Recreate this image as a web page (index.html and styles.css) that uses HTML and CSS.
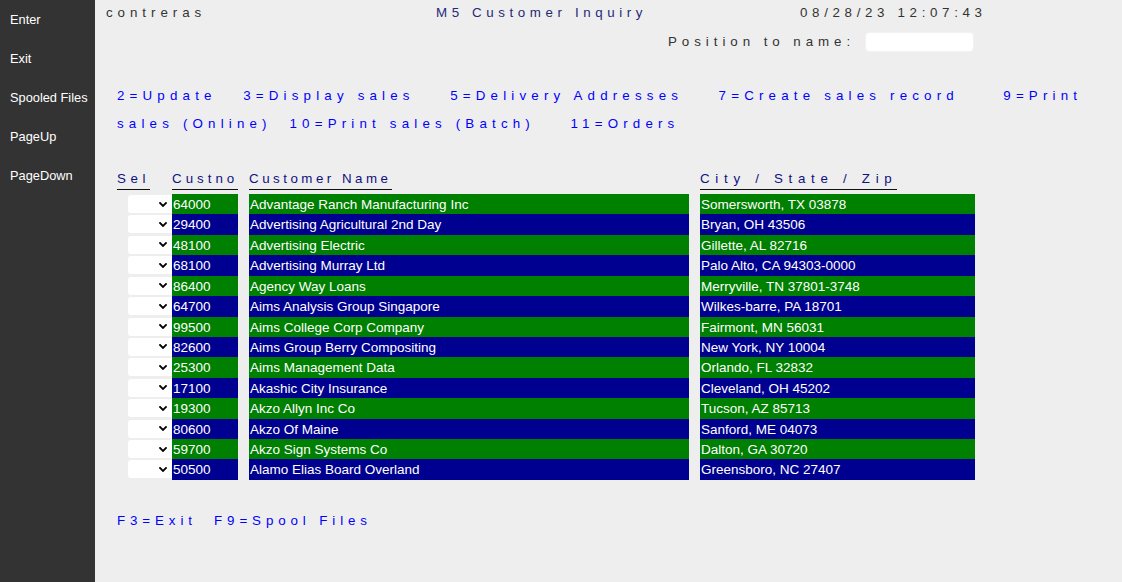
FILE: index.html
```html
<!DOCTYPE html>
<html>
<head>
<meta charset="utf-8">
<title>M5 Customer Inquiry</title>
<link rel="stylesheet" href="styles.css">
</head>
<body>
<div class="app">
  <nav class="side">
    <div class="side-item">Enter</div>
    <div class="side-item">Exit</div>
    <div class="side-item">Spooled Files</div>
    <div class="side-item">PageUp</div>
    <div class="side-item">PageDown</div>
  </nav>
  <main class="screen">
    <div class="hdr">
      <span class="user">contreras</span>
      <span class="title">M5 Customer Inquiry</span>
      <span class="stamp">08/28/23 12:07:43</span>
    </div>
    <div class="pos">
      <span class="pos-label">Position to name:</span>
      <div class="pos-input"></div>
    </div>
    <div class="opts">
      <div class="opt-line">2=Update   3=Display sales    5=Delivery Addresses    7=Create sales record     9=Print</div>
      <div class="opt-line">sales (Online)  10=Print sales (Batch)    11=Orders</div>
    </div>
    <div class="sfl">
      <div class="row heads">
        <div class="c-sel"><span class="hd hd-sel">Sel</span></div>
        <div class="c-no"><span class="hd hd-no">Custno</span></div>
        <div class="c-name"><span class="hd hd-name">Customer Name</span></div>
        <div class="c-city"><span class="hd hd-city">City / State / Zip</span></div>
      </div>
      <div class="rec">
        <div class="c-sel"><div class="sel"><svg viewBox="0 0 8 5" class="chev"><path d="M1 1 L4 4 L7 1"/></svg></div></div>
        <div class="c-no">64000</div><div class="c-name">Advantage Ranch Manufacturing Inc</div><div class="c-city">Somersworth, TX 03878</div>
      </div>
      <div class="rec">
        <div class="c-sel"><div class="sel"><svg viewBox="0 0 8 5" class="chev"><path d="M1 1 L4 4 L7 1"/></svg></div></div>
        <div class="c-no">29400</div><div class="c-name">Advertising Agricultural 2nd Day</div><div class="c-city">Bryan, OH 43506</div>
      </div>
      <div class="rec">
        <div class="c-sel"><div class="sel"><svg viewBox="0 0 8 5" class="chev"><path d="M1 1 L4 4 L7 1"/></svg></div></div>
        <div class="c-no">48100</div><div class="c-name">Advertising Electric</div><div class="c-city">Gillette, AL 82716</div>
      </div>
      <div class="rec">
        <div class="c-sel"><div class="sel"><svg viewBox="0 0 8 5" class="chev"><path d="M1 1 L4 4 L7 1"/></svg></div></div>
        <div class="c-no">68100</div><div class="c-name">Advertising Murray Ltd</div><div class="c-city">Palo Alto, CA 94303-0000</div>
      </div>
      <div class="rec">
        <div class="c-sel"><div class="sel"><svg viewBox="0 0 8 5" class="chev"><path d="M1 1 L4 4 L7 1"/></svg></div></div>
        <div class="c-no">86400</div><div class="c-name">Agency Way Loans</div><div class="c-city">Merryville, TN 37801-3748</div>
      </div>
      <div class="rec">
        <div class="c-sel"><div class="sel"><svg viewBox="0 0 8 5" class="chev"><path d="M1 1 L4 4 L7 1"/></svg></div></div>
        <div class="c-no">64700</div><div class="c-name">Aims Analysis Group Singapore</div><div class="c-city">Wilkes-barre, PA 18701</div>
      </div>
      <div class="rec">
        <div class="c-sel"><div class="sel"><svg viewBox="0 0 8 5" class="chev"><path d="M1 1 L4 4 L7 1"/></svg></div></div>
        <div class="c-no">99500</div><div class="c-name">Aims College Corp Company</div><div class="c-city">Fairmont, MN 56031</div>
      </div>
      <div class="rec">
        <div class="c-sel"><div class="sel"><svg viewBox="0 0 8 5" class="chev"><path d="M1 1 L4 4 L7 1"/></svg></div></div>
        <div class="c-no">82600</div><div class="c-name">Aims Group Berry Compositing</div><div class="c-city">New York, NY 10004</div>
      </div>
      <div class="rec">
        <div class="c-sel"><div class="sel"><svg viewBox="0 0 8 5" class="chev"><path d="M1 1 L4 4 L7 1"/></svg></div></div>
        <div class="c-no">25300</div><div class="c-name">Aims Management Data</div><div class="c-city">Orlando, FL 32832</div>
      </div>
      <div class="rec">
        <div class="c-sel"><div class="sel"><svg viewBox="0 0 8 5" class="chev"><path d="M1 1 L4 4 L7 1"/></svg></div></div>
        <div class="c-no">17100</div><div class="c-name">Akashic City Insurance</div><div class="c-city">Cleveland, OH 45202</div>
      </div>
      <div class="rec">
        <div class="c-sel"><div class="sel"><svg viewBox="0 0 8 5" class="chev"><path d="M1 1 L4 4 L7 1"/></svg></div></div>
        <div class="c-no">19300</div><div class="c-name">Akzo Allyn Inc Co</div><div class="c-city">Tucson, AZ 85713</div>
      </div>
      <div class="rec">
        <div class="c-sel"><div class="sel"><svg viewBox="0 0 8 5" class="chev"><path d="M1 1 L4 4 L7 1"/></svg></div></div>
        <div class="c-no">80600</div><div class="c-name">Akzo Of Maine</div><div class="c-city">Sanford, ME 04073</div>
      </div>
      <div class="rec">
        <div class="c-sel"><div class="sel"><svg viewBox="0 0 8 5" class="chev"><path d="M1 1 L4 4 L7 1"/></svg></div></div>
        <div class="c-no">59700</div><div class="c-name">Akzo Sign Systems Co</div><div class="c-city">Dalton, GA 30720</div>
      </div>
      <div class="rec">
        <div class="c-sel"><div class="sel"><svg viewBox="0 0 8 5" class="chev"><path d="M1 1 L4 4 L7 1"/></svg></div></div>
        <div class="c-no">50500</div><div class="c-name">Alamo Elias Board Overland</div><div class="c-city">Greensboro, NC 27407</div>
      </div>
    </div>
    <div class="fkeys">F3=Exit  F9=Spool Files</div>
  </main>
</div>
</body>
</html>
```

FILE: styles.css
```css
html, body {
  margin: 0;
  padding: 0;
  height: 100%;
}
body {
  font-family: "Liberation Sans", Arial, sans-serif;
  font-size: 13.33px;
  background: #eeeeee;
}
.app {
  display: flex;
  min-height: 582px;
  height: 100%;
}
.side {
  width: 95px;
  flex: none;
  background: #333333;
}
.side-item {
  height: 39px;
  line-height: 39px;
  padding-left: 10px;
  color: #ffffff;
  font-size: 12.8px;
  white-space: nowrap;
}
.screen {
  flex: 1;
  background: #eeeeee;
  padding: 5px 0 0 11px;
}
.hdr {
  display: grid;
  grid-template-columns: 330px 364px auto;
  line-height: 16px;
  height: 16px;
  white-space: nowrap;
}
.user {
  color: #333333;
  letter-spacing: 4.95px;
}
.title {
  color: #1e2a78;
  letter-spacing: 4.6px;
}
.stamp {
  color: #333333;
  letter-spacing: 4.66px;
}
.pos {
  display: flex;
  align-items: center;
  height: 19px;
  margin: 11px 0 0 562px;
  white-space: nowrap;
}
.pos-label {
  color: #333333;
  letter-spacing: 4.95px;
  margin-right: 10px;
}
.pos-input {
  width: 109px;
  height: 20px;
  background: #ffffff;
  border-radius: 4px;
  box-sizing: border-box;
  border: 1px solid #f2f2f2;
}
.opts {
  margin: 31px 0 0 11px;
  color: #0000ff;
  letter-spacing: 5.18px;
}
.opt-line {
  line-height: 28px;
  height: 28px;
  white-space: pre;
}
.sfl {
  margin: 33px 0 0 11px;
}
.row, .rec {
  display: flex;
}
.heads {
  margin-bottom: 4px;
  color: #101080;
  line-height: 16px;
}
.heads .c-sel {
  justify-content: flex-start;
}
.hd {
  display: inline-block;
  padding-bottom: 2px;
  border-bottom: 1px solid #111111;
  white-space: nowrap;
}
.hd-sel { letter-spacing: 4.6px; }
.hd-no { letter-spacing: 4.0px; }
.hd-name { letter-spacing: 3.5px; }
.hd-city { letter-spacing: 5.7px; }
.c-sel {
  width: 55px;
  flex: none;
  display: flex;
  justify-content: flex-end;
}
.c-no {
  width: 66px;
  flex: none;
}
.c-name {
  width: 440px;
  flex: none;
  margin-left: 11px;
}
.c-city {
  width: 275px;
  flex: none;
  margin-left: 11px;
}
.rec {
  height: 20.43px;
  line-height: 21px;
  font-size: 13.5px;
  color: #ffffff;
  white-space: nowrap;
}
.rec .c-no, .rec .c-name, .rec .c-city {
  padding-left: 1px;
  box-sizing: border-box;
  background: #008000;
}
.rec:nth-child(odd) .c-no,
.rec:nth-child(odd) .c-name,
.rec:nth-child(odd) .c-city {
  background: #000090;
}
.sel {
  width: 44px;
  height: 18px;
  margin-top: 1px;
  background: #ffffff;
  border-radius: 3px 0 0 3px;
  display: flex;
  align-items: center;
  justify-content: flex-end;
  padding-right: 5px;
  box-sizing: border-box;
}
.chev {
  width: 8px;
  height: 5px;
  display: block;
  fill: none;
  stroke: #000000;
  stroke-width: 1.8;
  stroke-linecap: square;
}
.fkeys {
  margin: 33px 0 0 11px;
  line-height: 16px;
  color: #0000ff;
  letter-spacing: 4.9px;
  white-space: pre;
}
```
